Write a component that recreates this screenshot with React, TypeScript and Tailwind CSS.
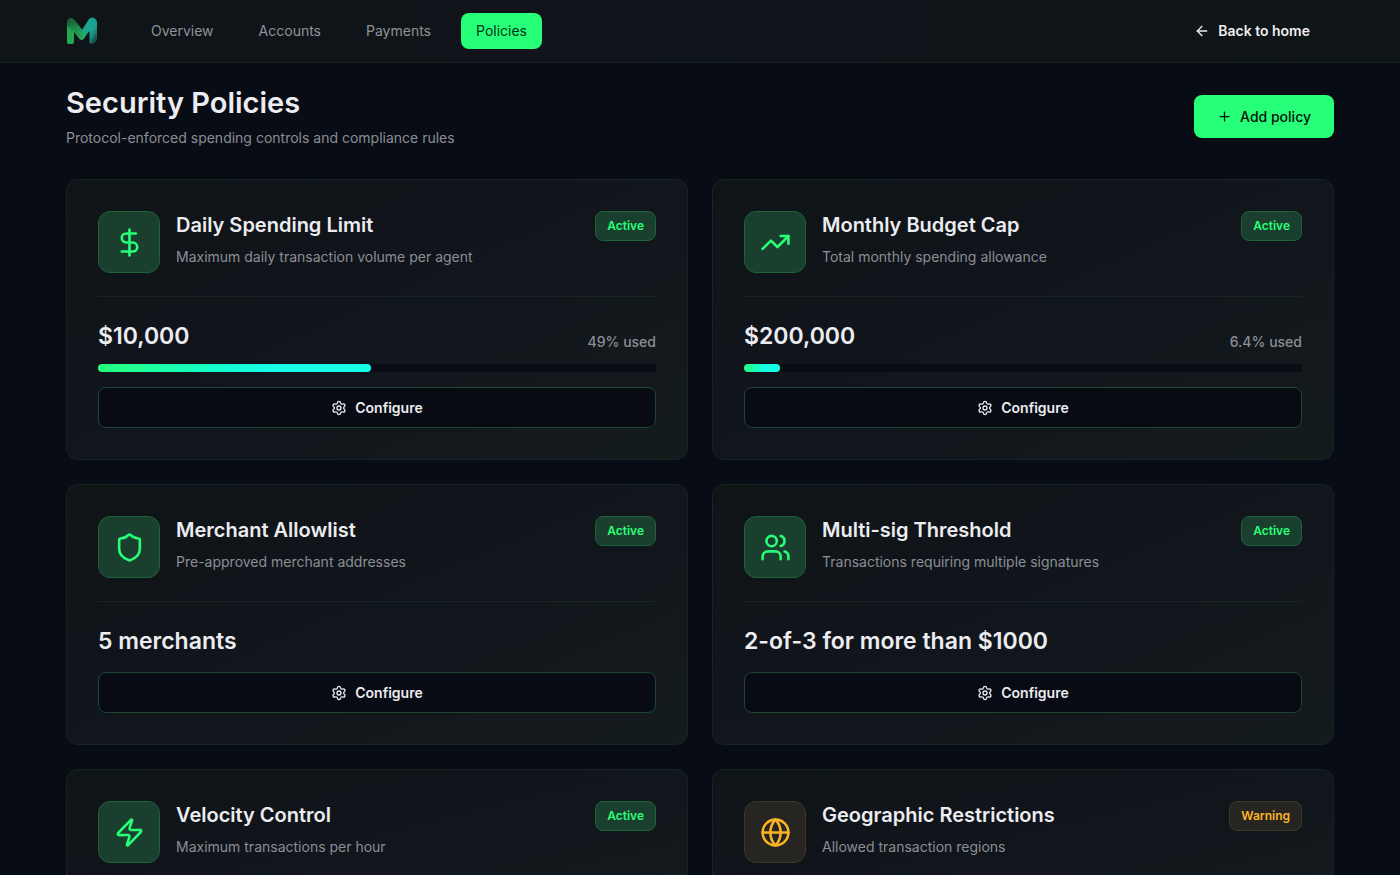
import clsx from 'clsx';
import {
  ArrowLeft,
  DollarSign,
  Globe,
  LucideIcon,
  Plus,
  Settings,
  Shield,
  TrendingUp,
  Users,
  Zap,
} from 'lucide-react';

type PolicyStatus = 'active' | 'warning';

interface IPolicy {
  title: string;
  description: string;
  icon: LucideIcon;
  status: PolicyStatus;
  value?: string;
  used?: number;
}

const TABS = ['Overview', 'Accounts', 'Payments', 'Policies'];

const POLICIES: IPolicy[] = [
  {
    title: 'Daily Spending Limit',
    description: 'Maximum daily transaction volume per agent',
    icon: DollarSign,
    status: 'active',
    value: '$10,000',
    used: 49,
  },
  {
    title: 'Monthly Budget Cap',
    description: 'Total monthly spending allowance',
    icon: TrendingUp,
    status: 'active',
    value: '$200,000',
    used: 6.4,
  },
  {
    title: 'Merchant Allowlist',
    description: 'Pre-approved merchant addresses',
    icon: Shield,
    status: 'active',
    value: '5 merchants',
  },
  {
    title: 'Multi-sig Threshold',
    description: 'Transactions requiring multiple signatures',
    icon: Users,
    status: 'active',
    value: '2-of-3 for more than $1000',
  },
  {
    title: 'Velocity Control',
    description: 'Maximum transactions per hour',
    icon: Zap,
    status: 'active',
  },
  {
    title: 'Geographic Restrictions',
    description: 'Allowed transaction regions',
    icon: Globe,
    status: 'warning',
  },
];

const Logo = () => (
  <svg viewBox="0 0 32 28" className="w-8 h-7" aria-hidden="true">
    <defs>
      <linearGradient id="fold" x1="0" y1="0" x2="1" y2="1">
        <stop offset="0" stopColor="#1a5234" />
        <stop offset="0.5" stopColor="#1f9950" />
        <stop offset="1" stopColor="#27b565" />
      </linearGradient>
      <linearGradient id="leg" x1="0.3" y1="0.3" x2="0.9" y2="1">
        <stop offset="0.4" stopColor="#1ba392" />
        <stop offset="1" stopColor="#125249" />
      </linearGradient>
    </defs>
    <path
      d="M1 8 8 13V25Q8 27 6 27H2.500Q1 27 1 25Z"
      fill="#22a650"
    />
    <path
      d="M16 13 23 2Q25 0 27 0.500L30 2.500Q31 3.500 31 6V21Q30.500 25 27 26.500H23.500V14L18 21Z"
      fill="url(#leg)"
    />
    <path
      d="M1 9V5Q1.500 1 5 1 7 1 9 3.500L20 18 18.500 21Q16 24.500 13.500 22L8 15Z"
      fill="url(#fold)"
    />
    <path
      d="M3.500 4 15 20M6 3 14.500 14.500M8 3.500 12 9"
      stroke="#12301f"
      strokeWidth="0.6"
      strokeDasharray="1 1"
    />
    <path
      d="M30 18 25.500 26M30 21 27.500 26"
      stroke="#0f1a1a"
      strokeWidth="0.6"
      strokeDasharray="1 1"
    />
  </svg>
);

const Header = () => (
  <header className="border-b border-[#16251f] bg-linear-to-r from-[#0f1417] via-[#10141b] to-[#101517]">
    <div className="mx-auto flex h-[62px] max-w-[1268px] items-center">
      <a href="#" aria-label="Home" className="mr-[38px]">
        <Logo />
      </a>
      <nav className="flex gap-[15px]">
        {TABS.map(tab => (
          <a
            key={tab}
            href="#"
            className={clsx(
              'rounded-lg px-[15px] py-2 text-sm',
              tab === 'Policies'
                ? 'bg-[#27ff78] text-[#07331a]'
                : 'text-[#8f9298]',
            )}
          >
            {tab}
          </a>
        ))}
      </nav>
      <a
        href="#"
        className="ml-auto flex items-center gap-2 px-6 text-sm font-semibold"
      >
        <ArrowLeft className="w-4 h-4" />
        Back to home
      </a>
    </div>
  </header>
);

const PolicyCard = ({ policy }: { policy: IPolicy }) => {
  const { title, description, icon: Icon, status, value, used } = policy;

  return (
    <article className="rounded-xl border border-[#16251f] bg-linear-to-br from-[#0f1417] via-[#11151c] to-[#141b1d] p-[31px]">
      <div className="flex items-start gap-4 border-b border-[#16251f] pb-[23px]">
        <div
          className={clsx(
            'flex size-[62px] shrink-0 items-center justify-center rounded-xl border',
            status === 'active'
              ? 'border-[#1d6239] bg-[#1b3f2e] text-[#27ff78]'
              : 'border-[#3b3726] bg-[#262521] text-[#fbb424]',
          )}
        >
          <Icon size={31} strokeWidth={2} />
        </div>
        <div className="flex-auto">
          <h2 className="mb-2 text-xl leading-7 font-semibold">{title}</h2>
          <p className="text-sm text-[#8b8e94]">{description}</p>
        </div>
        <span
          className={clsx(
            'rounded-lg border px-[11px] py-[6px] text-xs font-semibold',
            status === 'active'
              ? 'border-[#1d6239] bg-[#1b3f2e] text-[#27ff78]'
              : 'border-[#3b3726] bg-[#262521] text-[#fbb424]',
          )}
        >
          {status === 'active' ? 'Active' : 'Warning'}
        </span>
      </div>

      {value && (
        <div className="pt-[23px]">
          <div className="flex items-end justify-between">
            <span className="text-[23px] leading-8 font-semibold">{value}</span>
            {used !== undefined && (
              <span className="text-sm font-medium text-[#8b8e94]">
                {used}% used
              </span>
            )}
          </div>
          {used !== undefined && (
            <div className="mt-3 h-2 rounded-full bg-[#090c14]">
              <div
                className="h-2 rounded-full bg-linear-to-r from-[#27ff78] to-[#14ffe4] to-60%"
                style={{ width: `${used}%` }}
              />
            </div>
          )}
          <button
            type="button"
            className="mt-[15px] flex h-[41px] w-full items-center justify-center gap-2 rounded-lg border border-[#1b4630] bg-[#080b13] text-sm font-semibold"
          >
            <Settings className="w-4 h-4" />
            Configure
          </button>
        </div>
      )}
    </article>
  );
};

const App = () => (
  <div className="min-h-screen bg-[#080c14] font-['Inter',sans-serif] text-[#ececf1]">
    <Header />
    <main className="mx-auto max-w-[1268px] pt-[22px] pb-8">
      <div className="mb-[31px] flex items-center justify-between">
        <div>
          <h1 className="mb-[7px] text-[29px] leading-9 font-semibold">
            Security Policies
          </h1>
          <p className="text-sm text-[#8b8e94]">
            Protocol-enforced spending controls and compliance rules
          </p>
        </div>
        <button
          type="button"
          className="flex h-[43px] items-center gap-2 rounded-lg bg-[#27ff78] px-[23px] text-sm font-medium text-[#06130c]"
        >
          <Plus className="w-[15px] h-[15px]" />
          Add policy
        </button>
      </div>
      <div className="grid grid-cols-1 items-start gap-6 md:grid-cols-2">
        {POLICIES.map(policy => (
          <PolicyCard key={policy.title} policy={policy} />
        ))}
      </div>
    </main>
  </div>
);

export default App;
